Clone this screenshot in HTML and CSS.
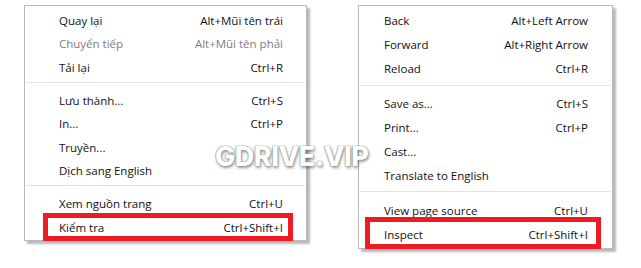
FILE: index.html
```html
<!DOCTYPE html>
<html lang="vi">
<head>
<meta charset="utf-8">
<title>Menu</title>
<link rel="stylesheet" href="styles.css">
</head>
<body>
<div class="stage">
  <div class="menu menu-vi">
    <div class="item"><span class="label">Quay lại</span><span class="key">Alt+Mũi tên trái</span></div>
    <div class="item disabled"><span class="label">Chuyển tiếp</span><span class="key">Alt+Mũi tên phải</span></div>
    <div class="item"><span class="label">Tải lại</span><span class="key">Ctrl+R</span></div>
    <div class="sep"></div>
    <div class="item"><span class="label">Lưu thành...</span><span class="key">Ctrl+S</span></div>
    <div class="item"><span class="label">In...</span><span class="key">Ctrl+P</span></div>
    <div class="item"><span class="label">Truyền...</span><span class="key"></span></div>
    <div class="item"><span class="label">Dịch sang English</span><span class="key"></span></div>
    <div class="sep"></div>
    <div class="item"><span class="label">Xem nguồn trang</span><span class="key">Ctrl+U</span></div>
    <div class="item"><span class="label">Kiểm tra</span><span class="key">Ctrl+Shift+I</span></div>
  </div>
  <div class="menu menu-en">
    <div class="item"><span class="label">Back</span><span class="key">Alt+Left Arrow</span></div>
    <div class="item"><span class="label">Forward</span><span class="key">Alt+Right Arrow</span></div>
    <div class="item"><span class="label">Reload</span><span class="key">Ctrl+R</span></div>
    <div class="sep"></div>
    <div class="item"><span class="label">Save as...</span><span class="key">Ctrl+S</span></div>
    <div class="item"><span class="label">Print...</span><span class="key">Ctrl+P</span></div>
    <div class="item"><span class="label">Cast...</span><span class="key"></span></div>
    <div class="item"><span class="label">Translate to English</span><span class="key"></span></div>
    <div class="sep"></div>
    <div class="item"><span class="label">View page source</span><span class="key">Ctrl+U</span></div>
    <div class="item"><span class="label">Inspect</span><span class="key">Ctrl+Shift+I</span></div>
  </div>
  <div class="highlight hl-vi"></div>
  <div class="highlight hl-en"></div>
  <div class="watermark">GDRIVE.VIP</div>
</div>
</body>
</html>
```

FILE: styles.css
```css
html, body {
  margin: 0;
  padding: 0;
  background: #ffffff;
}

.stage {
  position: relative;
  width: 641px;
  height: 268px;
  display: flex;
  align-items: flex-start;
  gap: 51px;
  padding: 5px 0 0 24px;
  box-sizing: border-box;
  font-family: "Open Sans", "Noto Sans", sans-serif;
  font-size: 11.5px;
  color: #111111;
}

.menu {
  display: flex;
  flex-direction: column;
  background: #ffffff;
  border: 1px solid #b9b9b9;
  box-shadow: 3px 3px 2px rgba(0, 0, 0, 0.28);
  box-sizing: border-box;
}

.menu-vi {
  width: 283px;
  height: 236px;
  padding: 3px 1px 1px 1px;
}

.menu-en {
  width: 255px;
  height: 244px;
  padding: 3px 1px 2px 1px;
}

.item {
  display: flex;
  justify-content: space-between;
  align-items: center;
  white-space: nowrap;
}

.menu-vi .item {
  height: 23.5px;
  padding: 0 22px 0 33px;
}

.menu-en .item {
  height: 24px;
  padding: 0 23px 0 24px;
}

.item.disabled {
  color: #7d7d7d;
}

.sep {
  height: 1px;
  background: #e3e3e3;
}

.menu-vi .sep {
  margin: 3px 0 6px 0;
}

.menu-en .sep {
  margin: 4px 0 6px 0;
}

.highlight {
  position: absolute;
  border: 5px solid #ed1c24;
  box-sizing: border-box;
}

.hl-vi {
  left: 43px;
  top: 213px;
  width: 250px;
  height: 28px;
}

.hl-en {
  left: 365px;
  top: 217px;
  width: 236px;
  height: 32px;
}

.watermark {
  position: absolute;
  left: 215px;
  top: 140px;
  font-family: "Inter", "DejaVu Sans", sans-serif;
  font-weight: 800;
  font-size: 27px;
  letter-spacing: -0.5px;
  color: #ffffff;
  text-shadow:
    0 0 1px #8a8a8a,
    0 0 1px #8a8a8a,
    0 0 1px #8a8a8a,
    1px 2px 3px rgba(0, 0, 0, 0.4);
}
```
